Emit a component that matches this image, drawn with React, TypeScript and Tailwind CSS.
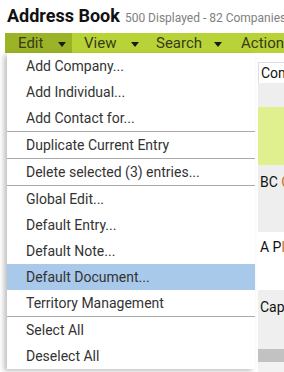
import React from "react";

const Arrow = () => (
  <svg width="8" height="5" viewBox="0 0 8 5" className="ml-auto mr-[6px] mt-[3px]">
    <path d="M0 0 H8 L4 5 Z" fill="#1a1a1a" />
  </svg>
);

type Item = { label: string; sep?: boolean; active?: boolean };

const items: Item[] = [
  { label: "Add Company..." },
  { label: "Add Individual..." },
  { label: "Add Contact for...", sep: true },
  { label: "Duplicate Current Entry", sep: true },
  { label: "Delete selected (3) entries...", sep: true },
  { label: "Global Edit..." },
  { label: "Default Entry..." },
  { label: "Default Note..." },
  { label: "Default Document...", active: true },
  { label: "Territory Management", sep: true },
  { label: "Select All" },
  { label: "Deselect All" },
];

export default function App() {
  return (
    <div
      className="relative w-[284px] h-[372px] overflow-hidden bg-white text-[#333]"
      style={{ fontFamily: "Roboto, 'Liberation Sans', sans-serif" }}
    >
      <div className="flex items-baseline pl-[7px] pt-[5px] h-[29px] whitespace-nowrap">
        <span className="text-[18px] leading-[22px] font-bold text-[#111]">Address Book</span>
        <span className="ml-[5px] text-[12px] text-[#808080]">500 Displayed - 82 Companies</span>
      </div>
      <div className="ml-[5px] mt-[4px] flex h-[20px] bg-[#b7d337] text-[15px] text-[#3a3a1a] whitespace-nowrap">
        <div className="flex shrink-0 items-center w-[67px] pl-[13px] bg-[#9bb327]">
          <span>Edit</span>
          <Arrow />
        </div>
        <div className="flex shrink-0 items-center w-[73px] pl-[12px]">
          <span>View</span>
          <Arrow />
        </div>
        <div className="flex shrink-0 items-center w-[83px] pl-[11px]">
          <span>Search</span>
          <Arrow />
        </div>
        <div className="flex shrink-0 items-center pl-[13px]">
          <span>Actions</span>
        </div>
      </div>
      <div className="ml-[258px] mt-[9px] text-[14px] text-[#111]">
        <div className="h-[21px] flex items-center pl-[2px] bg-white border-t border-l border-[#ddd] whitespace-nowrap">
          Company
        </div>
        <div className="h-[24px] bg-[#eeeeee]" />
        <div className="h-[58px] bg-[#e1f08e]" />
        <div className="h-[67px] bg-[#eeeeee] pl-[2px] pt-[7px] whitespace-nowrap">
          BC <span className="text-[#c07020]">C</span>
        </div>
        <div className="h-[58px] bg-white pl-[2px] pt-[5px] whitespace-nowrap">
          A P<span className="text-[#c07020]">l</span>
        </div>
        <div className="h-[59px] bg-[#efefef] pl-[2px] pt-[7px] whitespace-nowrap">Cap</div>
        <div className="h-[13px] bg-[#c2c2c2]" />
        <div className="h-[12px] bg-[#f2f2f2]" />
      </div>
      <div className="absolute left-[7px] top-[53px] w-[248px] bg-white shadow-[-3px_2px_5px_rgba(0,0,0,0.25)] text-[14px] text-[#333]">
        {items.map((it) => (
          <div
            key={it.label}
            className={`flex items-center pl-[19px] whitespace-nowrap ${
              it.active ? "bg-[#a8c9ea]" : ""
            } ${it.sep ? "h-[27px] border-b border-[#aaaaaa]" : "h-[26px]"}`}
          >
            {it.label}
          </div>
        ))}
      </div>
    </div>
  );
}
